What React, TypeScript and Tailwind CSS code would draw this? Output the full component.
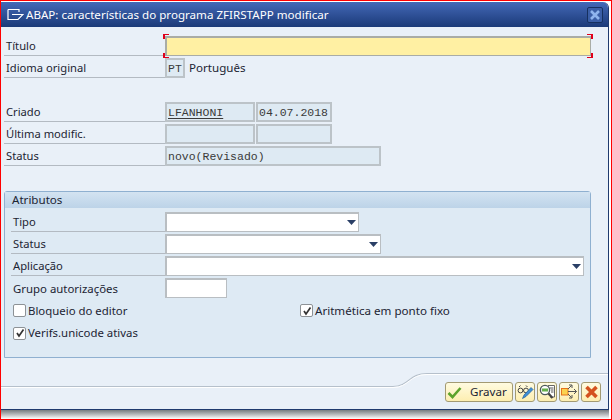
import React from "react";

const label = "font-['Noto_Sans','DejaVu_Sans',sans-serif]";
const mono = "font-['Liberation_Mono',monospace] text-[11.5px] text-[#3a3a3a]";

function Row({ text, indent, children }: { text: string; indent?: boolean; children?: React.ReactNode }) {
  return (
    <div className="flex h-[22px] items-end">
      <div className={`h-[20px] flex items-center border-b border-[#b3bac2] pt-[2px] pl-[2px] text-[11.2px] text-[#1c2433] ${indent ? "w-[154px]" : "w-[161px]"}`}>
        {text}
      </div>
      {children}
    </div>
  );
}

function Display({ w, text, under }: { w: string; text?: string; under?: boolean }) {
  return (
    <div className={`${w} h-[20px] border-2 border-[#bcc3c8] bg-[#deeaf3] flex items-center pt-[1px] pl-[1px] ${mono} ${under ? "underline underline-offset-2" : ""}`}>
      {text}
    </div>
  );
}

function Combo({ w }: { w: string }) {
  return (
    <div className={`${w} h-[20px] border-2 border-[#b9bec2] border-r-[1px] border-b-[1px] bg-white flex items-center justify-end pr-[2px]`}>
      <svg width="9" height="5" viewBox="0 0 9 5"><path d="M0 0H9L4.5 5Z" fill="#2a3f66" /></svg>
    </div>
  );
}

function Check({ checked }: { checked?: boolean }) {
  return (
    <div className="w-[13px] h-[13px] border border-[#8d9296] rounded-[2px] bg-white flex items-center justify-center">
      {checked && (
        <svg width="10" height="10" viewBox="0 0 10 10"><path d="M2 5L4 8L8.5 1.5" stroke="#333" strokeWidth="1.7" fill="none" /></svg>
      )}
    </div>
  );
}

function IconBtn({ children }: { children: React.ReactNode }) {
  return (
    <div className="w-[20px] h-[20px] rounded-[3px] border border-[#a39a72] bg-gradient-to-b from-[#fffbe0] to-[#fdeeb0] flex items-center justify-center">
      {children}
    </div>
  );
}

export default function App() {
  return (
    <div className={`w-[612px] h-[420px] bg-white border border-[#ff0000] ${label} overflow-hidden`}>
      <div className="w-[608px] h-[408px] mt-[1px] flex flex-col rounded-tr-[6px] bg-[#e9f0f8] border-r-[1px] border-b-[1px] border-[#1f3a6e] overflow-hidden">
        <div className="h-[25px] shrink-0 bg-gradient-to-b from-[#4469b8] to-[#1b3a78] flex items-center pl-[6px] pr-[4px] text-white text-[11.6px]">
          <svg width="17" height="13" viewBox="0 0 17 13" fill="none" stroke="#fff" strokeWidth="1.2">
            <path d="M1 1.5H12V4M1 1.5V11.5H11L16 6.5H5" />
          </svg>
          <span className="ml-[2px] flex-1">ABAP: características do programa ZFIRSTAPP modificar</span>
          <div className="w-[16px] h-[16px] rounded-[2px] border border-[#16305f] bg-[#3a5ea6] flex items-center justify-center mr-[1px]">
            <svg width="10" height="10" viewBox="0 0 10 10"><path d="M1 1L9 9M9 1L1 9" stroke="#8fb4ee" strokeWidth="2.6" /></svg>
          </div>
        </div>

        <div className="flex-1 flex flex-col pl-[3px] pt-[7px] relative">
          <Row text="Título">
            <div className="relative w-[426px] h-[20px] border-2 border-[#a9aca6] border-b-[1px] border-r-[1px] bg-[#fff0a3]">
              <span className="absolute -left-[4px] -top-[4px] w-[6px] h-[5px] border-l-2 border-t border-[#e0001a]" />
              <span className="absolute -right-[3px] -top-[4px] w-[6px] h-[5px] border-r-2 border-t border-[#e0001a]" />
              <span className="absolute -left-[4px] -bottom-[3px] w-[6px] h-[5px] border-l-2 border-b border-[#e0001a]" />
              <span className="absolute -right-[3px] -bottom-[3px] w-[6px] h-[5px] border-r-2 border-b border-[#e0001a]" />
            </div>
          </Row>
          <Row text="Idioma original">
            <Display w="w-[20px]" text="PT" />
            <span className="ml-[4px] self-center mt-[1px] text-[11.6px] text-[#1c2433]">Português</span>
          </Row>
          <div className="h-[22px]" />
          <Row text="Criado">
            <Display w="w-[90px]" text="LFANHONI" under />
            <div className="w-[1px]" />
            <Display w="w-[76px]" text="04.07.2018" />
          </Row>
          <Row text="Última modific.">
            <Display w="w-[90px]" />
            <div className="w-[1px]" />
            <Display w="w-[76px]" />
          </Row>
          <Row text="Status">
            <Display w="w-[216px]" text="novo(Revisado)" />
          </Row>

          <div className="mt-[25px] w-[587px] h-[167px] border border-[#8fb0d0] rounded-t-[3px] bg-[#deeaf4] flex flex-col">
            <div className="h-[16px] shrink-0 bg-gradient-to-b from-[#d3e3f1] to-[#bcd3e8] text-[11.6px] text-[#1c2433] pl-[7px] flex items-center">
              Atributos
            </div>
            <div className="pt-[2px] pl-[6px]">
              <Row text="Tipo" indent><Combo w="w-[194px]" /></Row>
              <Row text="Status" indent><Combo w="w-[216px]" /></Row>
              <Row text="Aplicação" indent><Combo w="w-[419px]" /></Row>
              <div className="flex h-[22px] items-end">
                <div className="w-[154px] h-[20px] pl-[2px] pt-[2px] flex items-center text-[11.4px] text-[#1c2433]">Grupo autorizações</div>
                <div className="w-[62px] h-[20px] border-2 border-[#b9bec2] border-r-[1px] border-b-[1px] bg-white" />
              </div>
              <div className="flex h-[22px] items-center mt-[2px] pl-[2px] text-[11.4px] text-[#1c2433]">
                <div className="w-[287px] flex items-center gap-[2px]"><Check /><span>Bloqueio do editor</span></div>
                <div className="flex items-center gap-[2px]"><Check checked /><span className="text-[11.6px]">Aritmética em ponto fixo</span></div>
              </div>
              <div className="flex h-[22px] items-center pl-[2px] text-[11.4px] text-[#1c2433] gap-[2px]"><Check checked /><span>Verifs.unicode ativas</span></div>
            </div>
          </div>

          <div className="flex-1 relative">
            <svg className="absolute left-[-3px] top-[14px]" width="608" height="16" viewBox="0 0 608 16" fill="none">
              <path d="M0 14.5H392C408 14.5 408 1.5 426 1.5H608" stroke="#b6c0cb" strokeWidth="1.2" />
              <path d="M0 15.5H392C408 15.5 408 2.5 426 2.5H608" stroke="#ffffff" strokeWidth="1" />
            </svg>
            <div className="absolute right-[7px] bottom-[7px] flex gap-[2px]">
              <div className="w-[68px] h-[20px] rounded-[3px] border border-[#a39a72] bg-gradient-to-b from-[#fffbe0] to-[#fdeeb0] flex items-center text-[11.6px] text-[#1c2433]">
                <svg className="ml-[1px]" width="15" height="13" viewBox="0 0 15 13"><path d="M1.5 7L5.5 11L13.5 2" stroke="#5da32c" strokeWidth="2.6" fill="none" /></svg>
                <span className="ml-[8px]">Gravar</span>
              </div>
              <IconBtn>
                <svg width="17" height="16" viewBox="0 0 17 16" fill="none">
                  <circle cx="3.5" cy="6.5" r="2.4" stroke="#444" />
                  <circle cx="9" cy="6.5" r="2.4" stroke="#444" />
                  <path d="M5.8 6.5H6.7M2 3L3.5 1.5M9 1.5L10.5 3" stroke="#444" />
                  <path d="M5.5 14.5L7 11L14 3.5L16 5.5L9 12.5Z" fill="#3f8fd6" stroke="#1f5e9b" strokeWidth="0.7" />
                </svg>
              </IconBtn>
              <IconBtn>
                <svg width="17" height="16" viewBox="0 0 17 16" fill="none">
                  <path d="M9 1.5H15.5V13H11" stroke="#666" fill="#fff" />
                  <path d="M11 4H14.5M12 6H14.5M12 8H14.5" stroke="#555" />
                  <circle cx="6" cy="6" r="4.6" fill="#fff" stroke="#4d5a5a" strokeWidth="1.4" />
                  <rect x="3" y="4.5" width="6" height="3" fill="#66b04c" />
                  <path d="M9.5 9.5L13.5 14" stroke="#444" strokeWidth="2.2" />
                </svg>
              </IconBtn>
              <IconBtn>
                <svg width="17" height="16" viewBox="0 0 17 16" fill="none">
                  <rect x="0.5" y="4.5" width="6.5" height="6.5" fill="#fbd24e" stroke="#e5721d" />
                  <path d="M7 7.5H15.5M13 5L15.5 7.5L13 10M7 5L10.5 1.5M8 1H11V4M7 10L10.5 13.5M8 14H11V11" stroke="#555" strokeWidth="1" />
                </svg>
              </IconBtn>
              <IconBtn>
                <svg width="15" height="14" viewBox="0 0 15 14"><path d="M2.5 2L12.5 12M12.5 2L2.5 12" stroke="#d4521f" strokeWidth="3.6" /></svg>
              </IconBtn>
            </div>
          </div>
        </div>
      </div>
      <div className="w-[608px] h-[9px] bg-gradient-to-b from-[#777c80] to-[#ffffff]" />
    </div>
  );
}
